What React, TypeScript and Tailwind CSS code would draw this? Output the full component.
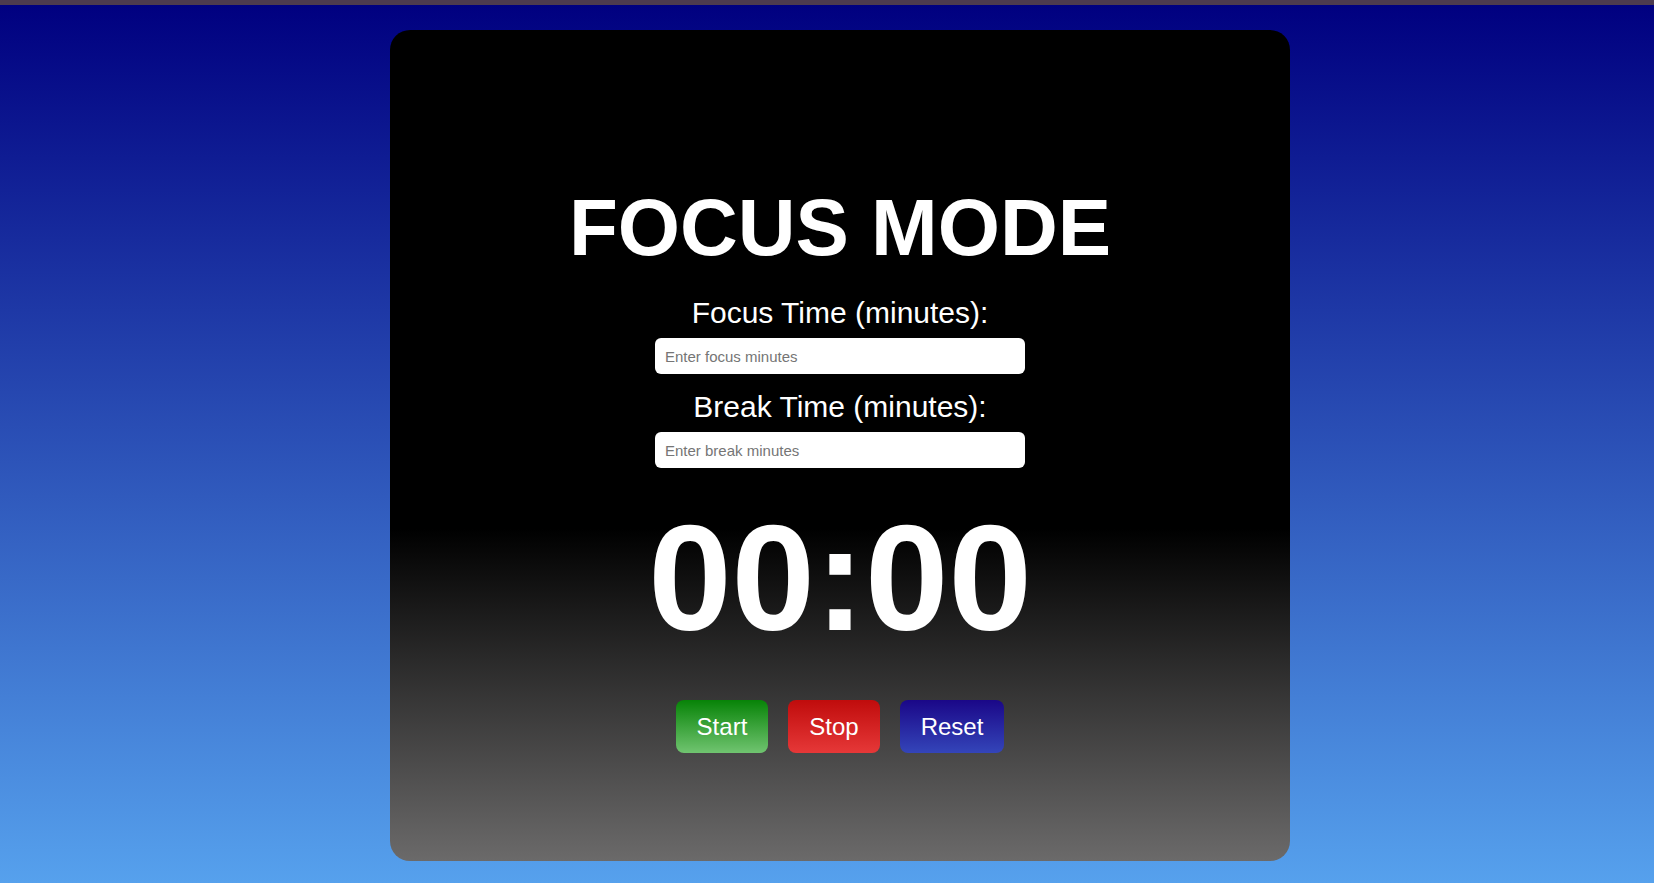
import React from "react";

export default function App() {
  return (
    <div className="w-full h-[883px] flex flex-col overflow-hidden font-[family-name:'Liberation_Sans',Arial,sans-serif]">
      <div className="h-[5px] bg-[#4d3b4f] shrink-0" />
      <div className="flex-1 flex justify-center pt-[25px] pl-[26px] bg-[linear-gradient(to_bottom,#000080,#56a1ed)]">
        <div className="w-[900px] h-[831px] rounded-[20px] bg-[linear-gradient(to_bottom,#000_60%,#6b6a6a)] flex flex-col items-center pt-[158px]">
          <h1 className="text-[80px] leading-[80px] font-bold text-white">FOCUS MODE</h1>
          <label className="mt-[30px] text-[30px] leading-[30px] text-white">Focus Time (minutes):</label>
          <input
            type="number"
            placeholder="Enter focus minutes"
            className="mt-[10px] w-[370px] h-[36px] rounded-[6px] px-[10px] text-[15px] bg-white text-black placeholder:text-[#757575] outline-none"
          />
          <label className="mt-[18px] text-[30px] leading-[30px] text-white">Break Time (minutes):</label>
          <input
            type="number"
            placeholder="Enter break minutes"
            className="mt-[10px] w-[370px] h-[36px] rounded-[6px] px-[10px] text-[15px] bg-white text-black placeholder:text-[#757575] outline-none"
          />
          <div className="mt-[35px] font-bold text-[150px] leading-[150px] text-white">
            00:00
          </div>
          <div className="mt-[47px] flex gap-[20px]">
            <button className="h-[53px] px-[21px] rounded-[8px] text-[24px] text-white bg-[linear-gradient(to_bottom,#078307,#70c470)]">
              Start
            </button>
            <button className="h-[53px] px-[21px] rounded-[8px] text-[24px] text-white bg-[linear-gradient(to_bottom,#c00c0c,#e63838)]">
              Stop
            </button>
            <button className="h-[53px] px-[21px] rounded-[8px] text-[24px] text-white bg-[linear-gradient(to_bottom,#1a0788,#3445b9)]">
              Reset
            </button>
          </div>
        </div>
      </div>
    </div>
  );
}
